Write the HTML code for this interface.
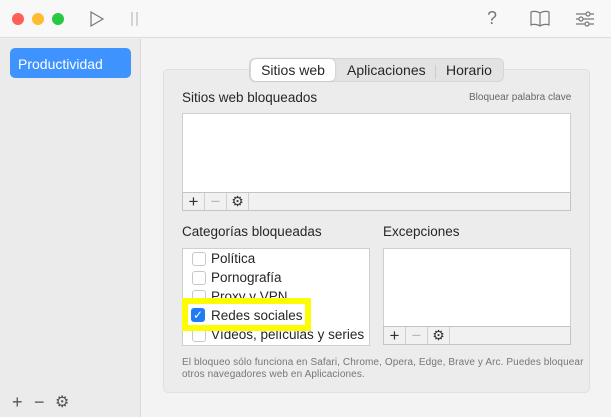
<!DOCTYPE html><html><head><style>
*{margin:0;padding:0;box-sizing:border-box}
body{width:611px;height:417px;overflow:hidden;background:#f3f3f3;font-family:"Liberation Sans",sans-serif;position:relative;color:#222}
.a{position:absolute}
.t{font-size:13.5px;color:#262626}
.cb{position:absolute;width:14px;height:14px;border:1px solid #c8c8c8;border-radius:3px;background:#fff}
.tb{position:absolute;height:19px;border:1px solid #c4c4c4;background:#f1f1f1;display:flex}
.tb span{width:22px;height:17px;border-right:1px solid #d0d0d0;display:flex;align-items:center;justify-content:center;font-size:17px;color:#333}
</style></head><body>
<div class="a" style="left:0;top:0;width:611px;height:38px;background:#f8f8f8;border-bottom:1px solid #dcdcdc"></div>
<div class="a" style="left:12px;top:13px;width:12px;height:12px;border-radius:6px;background:#fe5f57"></div>
<div class="a" style="left:32px;top:13px;width:12px;height:12px;border-radius:6px;background:#febc2e"></div>
<div class="a" style="left:52px;top:13px;width:12px;height:12px;border-radius:6px;background:#28c840"></div>
<svg class="a" style="left:88px;top:10px" width="18" height="18"><path d="M3 2 L15 9 L3 16 Z" fill="none" stroke="#777" stroke-width="1.2"/></svg>
<svg class="a" style="left:130px;top:10px" width="10" height="18"><path d="M2 2V16M7 2V16" stroke="#bbb" stroke-width="1.2"/></svg>
<div class="a" style="left:487px;top:8px;font-size:18px;color:#777">?</div>
<svg class="a" style="left:529px;top:10px" width="22" height="18"><path d="M11 3C8 1 4 1 2 2V15C4 14 8 14 11 16C14 14 18 14 20 15V2C18 1 14 1 11 3ZM11 3V16" fill="none" stroke="#777" stroke-width="1.2"/></svg>
<svg class="a" style="left:575px;top:10px" width="20" height="18"><g stroke="#777" stroke-width="1.2" fill="none"><path d="M1 4H19M1 9H19M1 14H19"/><circle cx="13" cy="4" r="2" fill="#f8f8f8"/><circle cx="6" cy="9" r="2" fill="#f8f8f8"/><circle cx="12" cy="14" r="2" fill="#f8f8f8"/></g></svg>
<div class="a" style="left:0;top:39px;width:141px;height:378px;background:#ebebeb;border-right:1px solid #d8d8d8"></div>
<div class="a" style="left:10px;top:48px;width:121px;height:30px;background:#3e93fe;border-radius:5px;color:#fff;font-size:14px;padding:8px 0 0 8px">Productividad</div>
<div class="a" style="left:12px;top:392px;font-size:18px;color:#555">+</div>
<div class="a" style="left:34px;top:392px;font-size:18px;color:#555">−</div>
<div class="a" style="left:55px;top:392px;font-size:16px;color:#555">⚙</div>
<div class="a" style="left:163px;top:69px;width:427px;height:324px;background:#ececec;border:1px solid #e0e0e0;border-radius:5px"></div>
<div class="a" style="left:249px;top:58px;width:255px;height:24px;background:#e3e3e3;border:1px solid #d6d6d6;border-radius:6px"></div>
<div class="a t" style="left:251px;top:59px;width:84px;height:22px;background:#fff;border-radius:5px;box-shadow:0 0 2px #bbb;text-align:center;padding-top:3px;font-size:14px">Sitios web</div>
<div class="a t" style="left:347px;top:62px;font-size:14px">Aplicaciones</div>
<div class="a" style="left:435px;top:65px;width:1px;height:14px;background:#ccc"></div>
<div class="a t" style="left:446px;top:62px;font-size:14px">Horario</div>
<div class="a t" style="left:182px;top:90px">Sitios web bloqueados</div>
<div class="a" style="left:469px;top:92px;font-size:10px;color:#666">Bloquear palabra clave</div>
<div class="a" style="left:182px;top:113px;width:389px;height:80px;background:#fff;border:1px solid #cfcfcf;border-bottom:none"></div>
<div class="tb" style="left:182px;top:192px;width:389px"><span>+</span><span style="color:#bbb">−</span><span style="font-size:14px">⚙</span></div>
<div class="a t" style="left:182px;top:224px">Categorías bloqueadas</div>
<div class="a t" style="left:383px;top:224px">Excepciones</div>
<div class="a" style="left:182px;top:248px;width:188px;height:98px;background:#fff;border:1px solid #cfcfcf;overflow:hidden">
<div class="cb" style="left:9px;top:3px"></div><div class="a t" style="left:28px;top:2px">Política</div>
<div class="cb" style="left:9px;top:22px"></div><div class="a t" style="left:28px;top:21px">Pornografía</div>
<div class="cb" style="left:9px;top:41px"></div><div class="a t" style="left:28px;top:40px">Proxy y VPN</div>
<div class="cb" style="left:9px;top:79px"></div><div class="a t" style="left:28px;top:78px">Vídeos, películas y series</div>
</div>
<div class="a" style="left:182px;top:298px;width:129px;height:33px;border:6px solid #fdfc03;background:#fff"></div>
<div class="a" style="left:191px;top:308px;width:14px;height:14px;border-radius:3px;background:#1e7cf7;color:#fff;font-size:12px;line-height:14px;text-align:center">✓</div>
<div class="a t" style="left:211px;top:308px">Redes sociales</div>
<div class="a" style="left:383px;top:248px;width:188px;height:79px;background:#fff;border:1px solid #cfcfcf;border-bottom:none"></div>
<div class="tb" style="left:383px;top:326px;width:188px"><span>+</span><span style="color:#bbb">−</span><span style="font-size:14px">⚙</span></div>
<div class="a" style="left:182px;top:357px;font-size:10px;color:#777;line-height:12px;width:405px;letter-spacing:0.1px">El bloqueo sólo funciona en Safari, Chrome, Opera, Edge, Brave y Arc. Puedes bloquear<br>otros navegadores web en Aplicaciones.</div>
</body></html>
